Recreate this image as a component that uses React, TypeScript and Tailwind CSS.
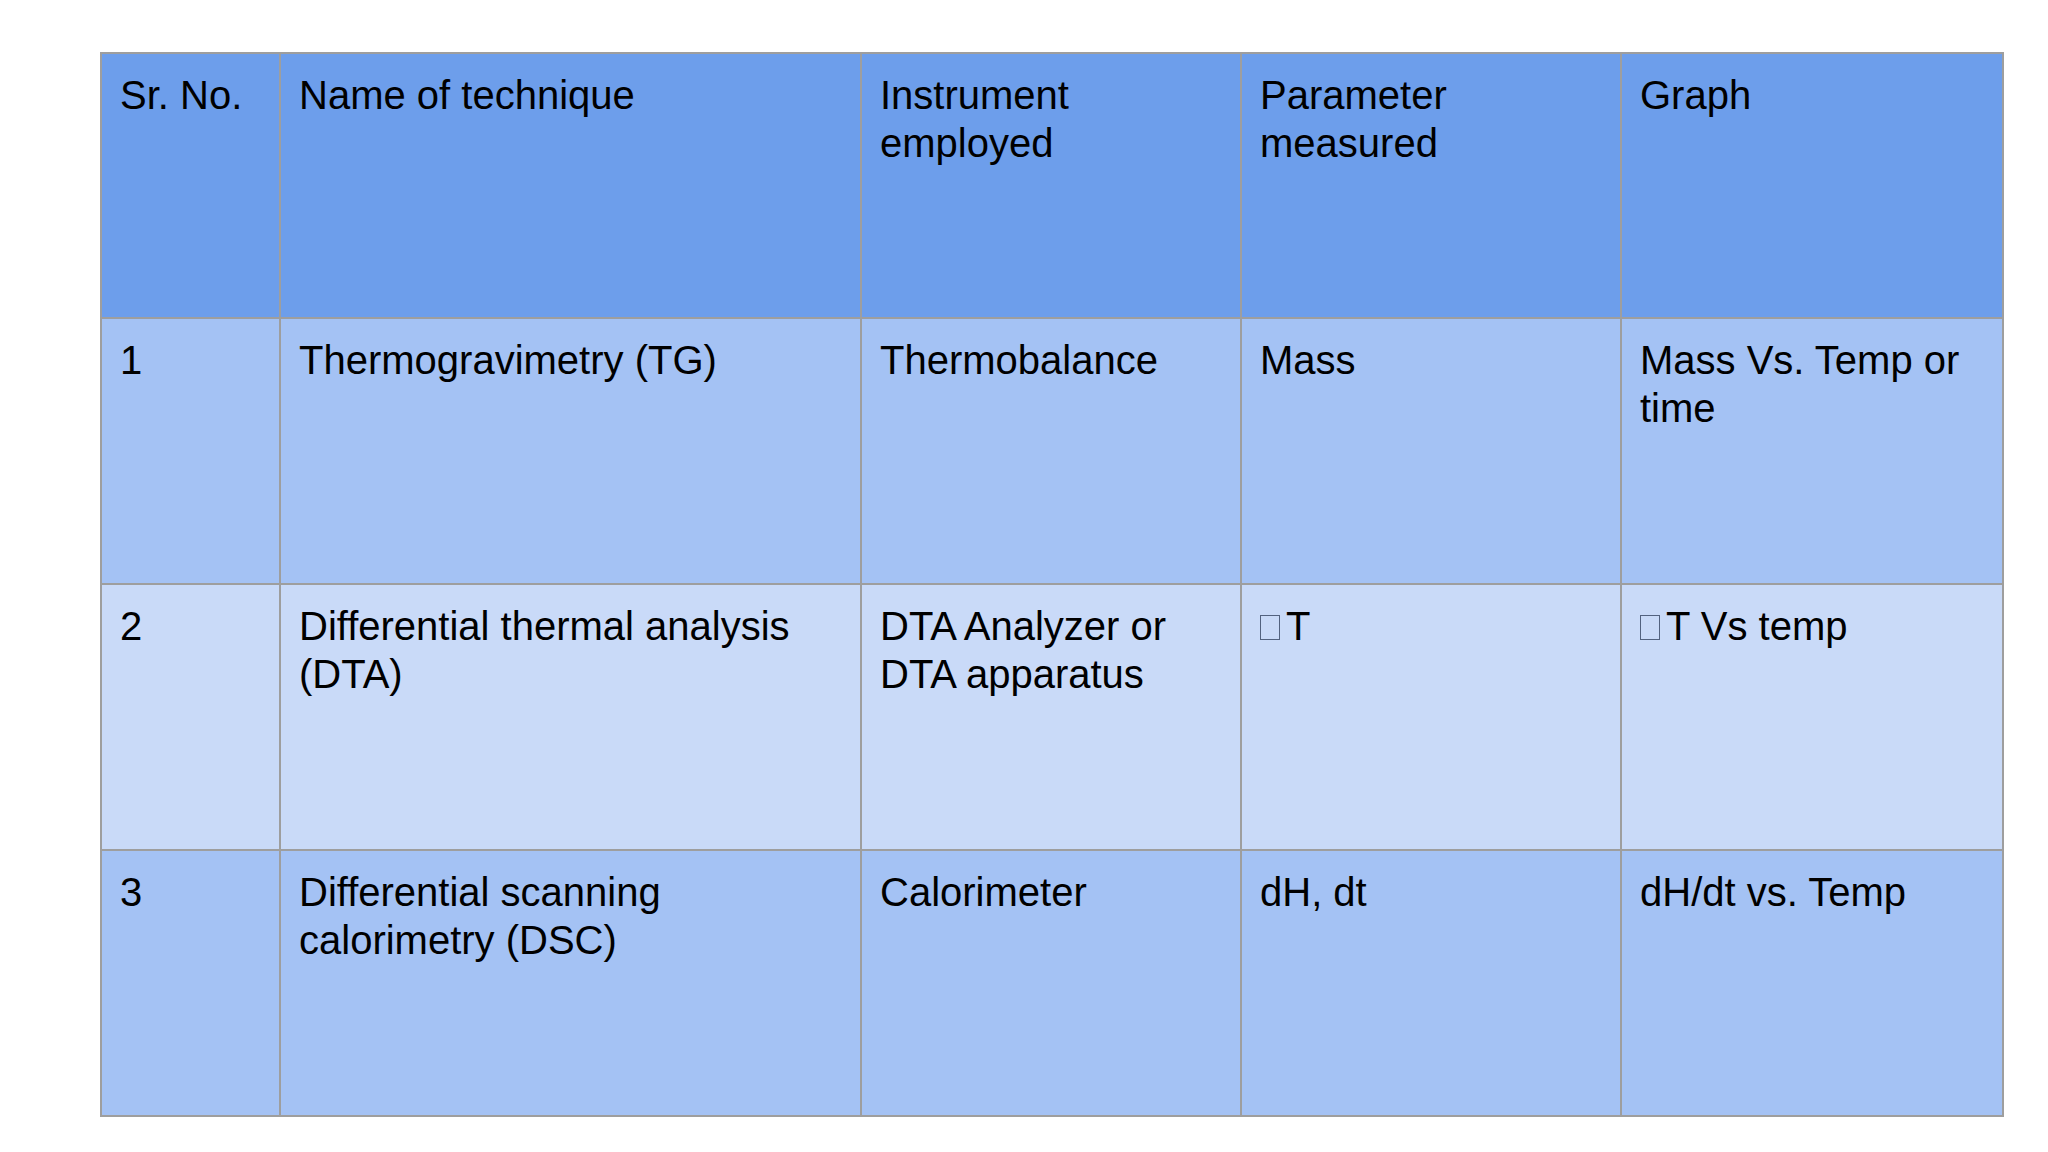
const header = ["Sr. No.", "Name of technique", "Instrument employed", "Parameter measured", "Graph"];

type Cell = React.ReactNode;

const Tofu = () => (
  <span className="mr-[6px] inline-block h-[25px] w-[20px] border border-[#52627f] align-baseline" />
);

const rows: { bg: string; cells: Cell[] }[] = [
  {
    bg: "bg-[#a4c2f4]",
    cells: ["1", "Thermogravimetry (TG)", "Thermobalance", "Mass", "Mass Vs. Temp or time"],
  },
  {
    bg: "bg-[#c9daf8]",
    cells: [
      "2",
      "Differential thermal analysis (DTA)",
      "DTA Analyzer or DTA apparatus",
      <>
        <Tofu />T
      </>,
      <>
        <Tofu />T Vs temp
      </>,
    ],
  },
  {
    bg: "bg-[#a4c2f4]",
    cells: ["3", "Differential scanning calorimetry (DSC)", "Calorimeter", "dH, dt", "dH/dt vs. Temp"],
  },
];

const widths = ["w-[179px]", "w-[581px]", "w-[380px]", "w-[380px]", "w-[382px]"];

export default function App() {
  return (
    <div className="min-h-screen w-full bg-white pl-[100px] pt-[52px] font-['Liberation_Sans',Arial,sans-serif] text-[40px] leading-[48px] text-black">
      <table className="w-[1902px] table-fixed border-collapse border-2 border-[#9e9e9e]">
        <colgroup>
          {widths.map((w, i) => (
            <col key={i} className={w} />
          ))}
        </colgroup>
        <thead>
          <tr className="h-[265px] bg-[#6d9eeb]">
            {header.map((h) => (
              <th key={h} className="border-2 border-[#9e9e9e] px-[18px] pt-[17px] text-left align-top font-normal">
                {h}
              </th>
            ))}
          </tr>
        </thead>
        <tbody>
          {rows.map((r, i) => (
            <tr key={i} className={`h-[266px] ${r.bg}`}>
              {r.cells.map((c, j) => (
                <td key={j} className="border-2 border-[#9e9e9e] px-[18px] pt-[17px] align-top">
                  {c}
                </td>
              ))}
            </tr>
          ))}
        </tbody>
      </table>
    </div>
  );
}
